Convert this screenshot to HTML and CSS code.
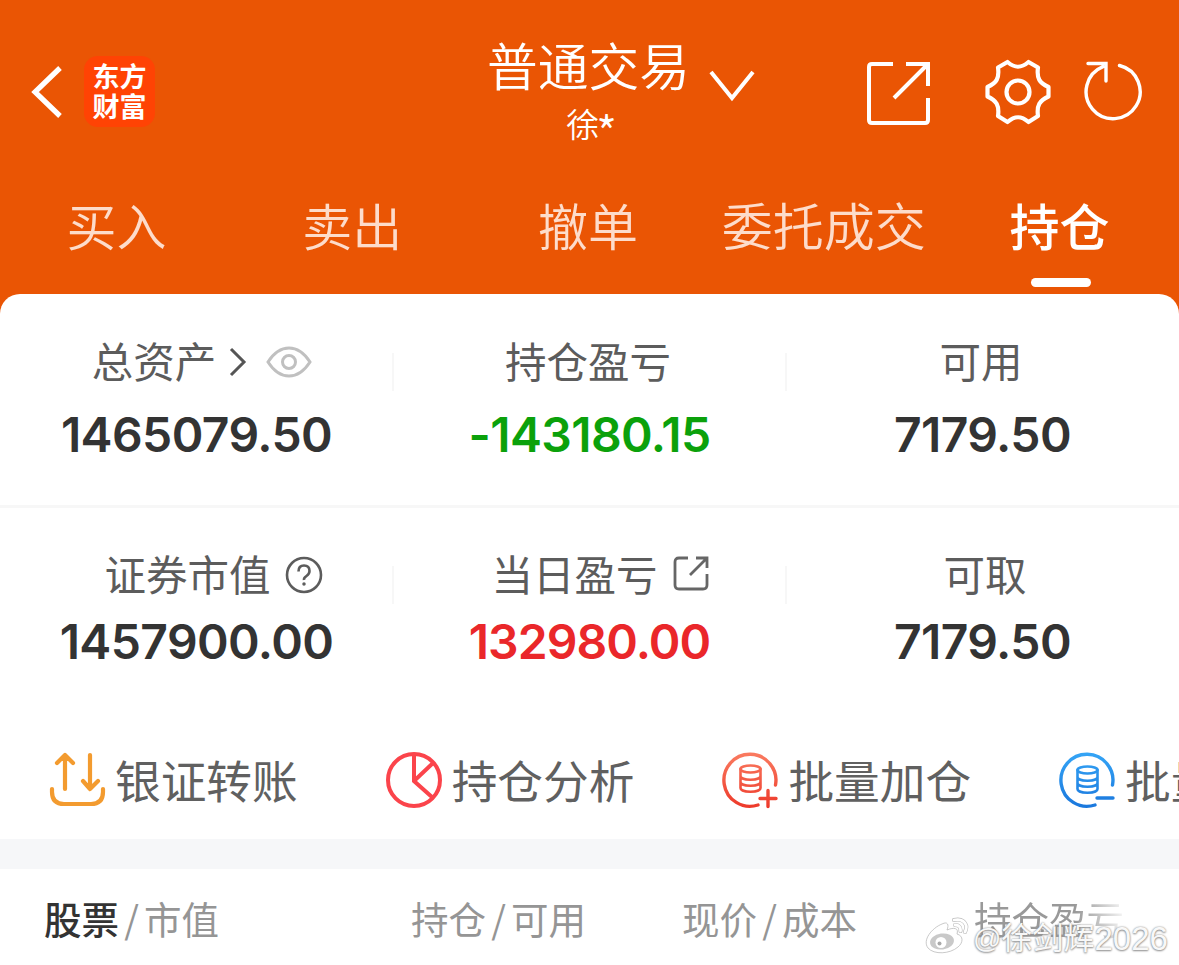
FILE: index.html
```html
<!DOCTYPE html>
<html lang="zh-CN">
<head>
<meta charset="utf-8">
<title>普通交易</title>
<link rel="stylesheet" href="styles.css">
</head>
<body>
<div class="app">
  <header class="topbar">
    <div class="topbar-left">
      <svg class="back" width="34" height="56" viewBox="0 0 34 56"><path d="M31 4 6 28 31 52" fill="none" stroke="#fff" stroke-width="5.200" stroke-linecap="butt"/></svg>
      <div class="logo"><span>东方</span><span>财富</span></div>
    </div>
    <div class="heading">
      <h1 class="title">普通交易</h1>
      <div class="account">徐<span class="mask">*</span></div>
    </div>
    <div class="topbar-right">
      <svg class="chevron" width="48" height="34" viewBox="0 0 48 34"><path d="M3 4 24 30 45 4" fill="none" stroke="#fff" stroke-width="4"/></svg>
      <svg class="open" width="64" height="64" viewBox="0 0 64 64" fill="none" stroke="#fff" stroke-width="4"><path d="M26 3H5Q2 3 2 6V59Q2 62 5 62H58Q61 62 61 59V37M39 3H61V25M27 37 60 4"/></svg>
      <svg class="gear" width="68" height="68" viewBox="0 0 68 68" fill="none" stroke="#fff" stroke-width="4.200" stroke-linejoin="round"><path d="M23.500 4 14 9.500C15.500 20.500 12.500 25 3.500 29V38.500C12.500 42.500 15.500 47.500 14 58L23.500 64C31 57.500 37 57.500 44.500 64L54 58C52.500 47.500 55.500 42.500 64.500 38.500V29C55.500 25 52.500 20.500 54 9.500L44.500 4C37 10.500 31 10.500 23.500 4Z"/><circle cx="34" cy="34" r="11.500"/></svg>
      <svg class="refresh" width="60" height="62" viewBox="0 0 60 62" fill="none" stroke="#fff" stroke-width="3.400"><path d="M36.500 6.500A27 27 0 1 1 20 7.700M5 4.500H23V22" stroke-linecap="round"/></svg>
    </div>
  </header>

  <nav class="tabs">
    <a class="tab"><span>买入</span></a>
    <a class="tab"><span>卖出</span></a>
    <a class="tab"><span>撤单</span></a>
    <a class="tab tab-wide"><span>委托成交</span></a>
    <a class="tab tab-active"><span>持仓</span></a>
  </nav>

  <main class="sheet">
    <section class="stats stats-first">
      <div class="stat">
        <div class="label label-total">总资产
          <svg class="more" width="20" height="32" viewBox="0 0 20 32"><path d="M3 3 16 16 3 29" fill="none" stroke="#555" stroke-width="3"/></svg>
          <svg class="eye" width="46" height="34" viewBox="0 0 46 34" fill="none" stroke="#c0c0c0" stroke-width="3"><path d="M2 17Q11 3 23 3T44 17Q35 31 23 31T2 17Z"/><circle cx="23" cy="17" r="6.500"/></svg>
        </div>
        <div class="value">1465079.50</div>
      </div>
      <div class="stat">
        <div class="label label-position">持仓盈亏</div>
        <div class="value down">-143180.15</div>
      </div>
      <div class="stat">
        <div class="label label-position">可用</div>
        <div class="value">7179.50</div>
      </div>
    </section>
    <section class="stats stats-second">
      <div class="stat">
        <div class="label label-help">证券市值
          <svg class="help" width="38" height="38" viewBox="0 0 38 38" fill="none" stroke="#5c5c5c" stroke-width="2.600"><circle cx="19" cy="19" r="17"/><path d="M13.500 15.500Q13.500 9.500 19 9.500T24.500 15Q24.500 18 21.500 20T19 24"/><circle cx="19" cy="28" r="1" fill="#5c5c5c" stroke-width="1.500"/></svg>
        </div>
        <div class="value">1457900.00</div>
      </div>
      <div class="stat">
        <div class="label label-today">当日盈亏
          <svg class="detail" width="36" height="36" viewBox="0 0 36 36" fill="none" stroke="#666" stroke-width="2.800"><path d="M15 2H6Q2 2 2 6V29Q2 33 6 33H30Q34 33 34 29V18M23 2H34V12M17 19 33 3"/></svg>
        </div>
        <div class="value up">132980.00</div>
      </div>
      <div class="stat">
        <div class="label label-cash">可取</div>
        <div class="value">7179.50</div>
      </div>
    </section>

    <section class="actions">
      <div class="action">
        <svg width="57" height="57" viewBox="0 0 57 57" fill="none" stroke="#f39b2f" stroke-width="4.200" stroke-linecap="round" stroke-linejoin="round"><path d="M3 37V40Q3 52 15 52H42Q54 52 54 40V37M16 37V3M8 11 16 3 24 11M41 3V37M34 29 41 37 49 29"/></svg>
        <span>银证转账</span>
      </div>
      <div class="action">
        <svg width="57" height="57" viewBox="0 0 57 57" fill="none" stroke="#fb444b" stroke-width="4"><circle cx="28" cy="28" r="26"/><path d="M28 3V29L46.500 45.500M28 29 47 11"/></svg>
        <span>持仓分析</span>
      </div>
      <div class="action">
        <svg width="57" height="57" viewBox="0 0 57 57" fill="none" stroke="url(#addTone)" stroke-width="3.400" stroke-linecap="round"><defs><linearGradient id="addTone" gradientUnits="userSpaceOnUse" x1="0" y1="0" x2="0" y2="57"><stop stop-color="#fa7c61"/><stop offset="1" stop-color="#ed3829"/></linearGradient></defs><path d="M36 53A26 26 0 1 1 53.500 33M38 46.500H54M46 38.500V54.500"/><g stroke-width="2.600"><ellipse cx="28.500" cy="17" rx="10" ry="3.500"/><path d="M18.500 17V36C18.500 41 38.500 41 38.500 36V17M18.500 24C18.500 29 38.500 29 38.500 24M18.500 30C18.500 35 38.500 35 38.500 30"/></g></svg>
        <span>批量加仓</span>
      </div>
      <div class="action">
        <svg width="57" height="57" viewBox="0 0 57 57" fill="none" stroke="url(#cutTone)" stroke-width="3.400" stroke-linecap="round"><defs><linearGradient id="cutTone" gradientUnits="userSpaceOnUse" x1="0" y1="0" x2="0" y2="57"><stop stop-color="#35a5f6"/><stop offset="1" stop-color="#1976dc"/></linearGradient></defs><path d="M36 53A26 26 0 1 1 53.500 33M38 46H54"/><g stroke-width="2.600"><ellipse cx="28.500" cy="18" rx="10" ry="3.500"/><path d="M18.500 18V37C18.500 42 38.500 42 38.500 37V18M18.500 25C18.500 30 38.500 30 38.500 25M18.500 31C18.500 36 38.500 36 38.500 31"/></g></svg>
        <span>批量减仓</span>
      </div>
    </section>

    <div class="columns">
      <div class="col"><b>股票</b><i>/</i>市值</div>
      <div class="col">持仓<i>/</i>可用</div>
      <div class="col">现价<i>/</i>成本</div>
      <div class="col col-fade">持仓盈亏</div>
    </div>
  </main>
  <div class="watermark">
    <svg width="44" height="38" viewBox="0 0 44 38"><path fill="#fff" stroke="#bbb" stroke-width=".8" d="M17 7C23 4 24 8 22 13C29 10 34 11 32 17C39 19 38 26 33 30C25 37 9 38 3 31C-3 23 7 11 17 7Z"/><ellipse cx="17" cy="24.500" rx="12" ry="8" fill="#c9c9c9" transform="rotate(-8 17 24.500)"/><circle cx="16" cy="25.500" r="5.500" fill="#fff"/><circle cx="14.500" cy="26.500" r="2" fill="#aaa"/><path d="M29 3Q38 1 41 8Q42 11 40 15M30 8Q36 8 35.500 14" fill="none" stroke="#bbb" stroke-width="4" stroke-linecap="round"/><path d="M29 3Q38 1 41 8Q42 11 40 15M30 8Q36 8 35.500 14" fill="none" stroke="#fff" stroke-width="2.800" stroke-linecap="round"/></svg>
    <span class="at">@</span><span>徐剑辉</span><span class="year">2026</span>
  </div>
</div>
</body>
</html>
```
FILE: styles.css
```css
* { box-sizing: border-box; }

body {
  margin: 0;
  font-family: "Noto Sans CJK SC", sans-serif;
  background: #ea5504;
}

svg { display: block; flex: none; }

.app {
  position: relative;
  width: 1179px;
  height: 965px;
  overflow: hidden;
  background: #ea5504;
}

.topbar {
  display: grid;
  grid-template-columns: 487px 203px 1fr;
  height: 180px;
  color: #fff;
}

.topbar-left {
  display: flex;
  align-items: flex-start;
  padding: 56px 0 0 29px;
}

.back { margin-top: 8px; }

.logo {
  display: flex;
  flex-direction: column;
  align-items: center;
  width: 71px;
  height: 71px;
  margin-left: 21px;
  padding-top: 5px;
  border-radius: 14px;
  background: #ff4304;
  font-size: 27px;
  font-weight: 700;
  line-height: 30px;
}

.heading { padding-top: 32px; text-align: center; white-space: nowrap; }

.title {
  margin: 0;
  font-size: 50.700px;
  font-weight: 350;
  line-height: 65px;
}

.account {
  height: 40px;
  margin-top: 6px;
  padding-left: 6px;
  font-size: 33px;
  font-weight: 350;
  line-height: 40px;
}

.mask {
  margin-left: -3px;
  font-size: 45px;
  line-height: 0;
  vertical-align: -13px;
}

.topbar-right { display: flex; align-items: flex-start; }
.chevron { margin: 68px 0 0 18px; }
.open { margin: 61px 0 0 111px; }
.gear { margin: 58px 0 0 53px; }
.refresh { margin: 59px 0 0 31px; }

.tabs {
  display: grid;
  grid-template-columns: repeat(5, 1fr);
  height: 114px;
}

.tab {
  display: flex;
  flex-direction: column;
  align-items: center;
  padding-top: 12px;
  color: #fddccb;
  font-size: 50px;
  font-weight: 350;
  line-height: 64px;
}

.tab span { margin-right: 3px; }
.tab-wide { font-size: 51px; }
.tab-active { color: #fff; font-weight: 500; }

.tab-active::after {
  content: "";
  width: 60px;
  height: 9px;
  margin-top: 22px;
  border-radius: 5px;
  background: #fff;
}

.sheet {
  height: 671px;
  border-radius: 20px 20px 0 0;
  background: #fff;
  overflow: hidden;
}

.stats { display: grid; grid-template-columns: repeat(3, 1fr); }
.stats-first { height: 214px; padding-top: 41px; border-bottom: 3px solid #f7f7f7; }
.stats-second { height: 211px; padding-top: 40px; }

.stat { position: relative; text-align: center; }

.stat + .stat::before {
  content: "";
  position: absolute;
  left: -1px;
  top: 18px;
  width: 2px;
  height: 38px;
  background: #f7f7f7;
}

.label {
  display: flex;
  justify-content: center;
  align-items: center;
  height: 50px;
  color: #5c5c5c;
  font-size: 41.500px;
  line-height: 50px;
}

.more { margin: 4px 0 0 12px; }
.eye { margin: 4px -8px 0 18px; }
.help { margin: 4px 0 0 14px; }
.label-total { padding-left: 3px; }
.label-position { padding-right: 3px; }
.label-help { padding-left: 34px; }
.label-cash { padding-left: 5px; }
.detail { margin: 2px 0 0 15px; }
.label-today { padding-left: 21px; }

.value {
  margin-top: 20px;
  color: #333;
  font-family: Inter, sans-serif;
  font-size: 48px;
  font-weight: 600;
  letter-spacing: -.6px;
  line-height: 60px;
}

.stats-second .value { margin-top: 14px; }
.value.down { color: #0ba10b; }
.value.up { color: #ea272a; letter-spacing: -.9px; }

.actions {
  display: flex;
  height: 120px;
  padding: 33px 0 0 49px;
}

.action {
  display: flex;
  flex: none;
  width: 336.700px;
  color: #606060;
  font-size: 45.700px;
  line-height: 54px;
  white-space: nowrap;
}

.action span { margin-left: 9px; }

.columns {
  display: grid;
  grid-template-columns: 367px 271px 292px 1fr;
  height: 130px;
  padding: 25px 0 0 44px;
  border-top: 30px solid #f6f7f9;
  color: #959595;
  font-size: 37.500px;
  line-height: 48px;
  white-space: nowrap;
}

.col b { color: #333; font-weight: 500; }
.col i { display: inline-block; width: 25px; font-style: normal; text-align: center; }

.col-fade {
  width: 155px;
  color: transparent;
  background: linear-gradient(90deg, #999 0 65%, #bbb 78%, #fff);
  background-clip: text;
  -webkit-background-clip: text;
}

.watermark {
  position: absolute;
  left: 925px;
  top: 917px;
  display: flex;
  color: rgba(255, 255, 255, .95);
  font-family: "Liberation Sans", "Noto Sans CJK SC", sans-serif;
  font-size: 31px;
  line-height: 43px;
  white-space: nowrap;
  text-shadow: 0 0 2px #888, 0 1px 2px #999;
}

.watermark .at { margin-left: 4px; font-size: 28px; }
.watermark .year { font-size: 33px; }
```
